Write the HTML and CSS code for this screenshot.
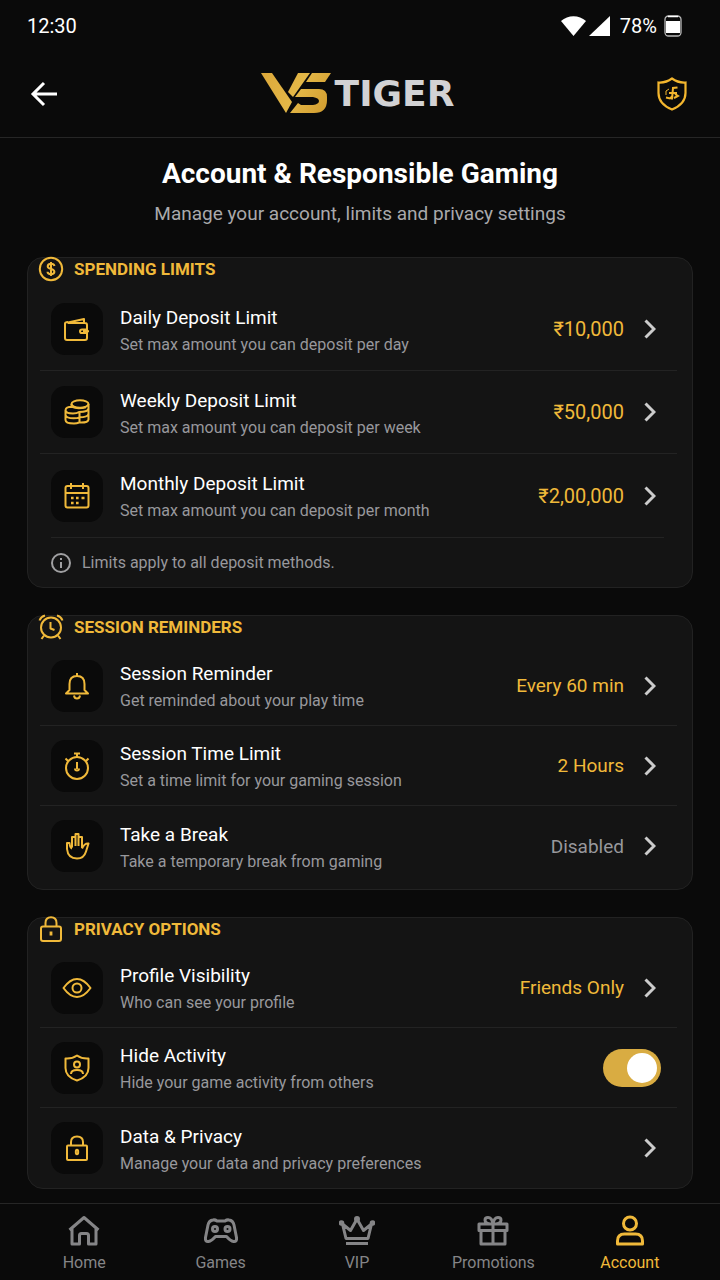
FILE: index.html
```html
<!DOCTYPE html>
<html lang="en">
<head>
    <meta charset="UTF-8">
    <meta name="viewport" content="width=device-width, initial-scale=1.0">
    <title>Account &amp; Responsible Gaming</title>
    <link rel="stylesheet" href="styles.css">
</head>
<body>
    <svg class="sprite" aria-hidden="true">
        <symbol id="chevron" viewBox="0 0 12 20">
            <path d="M1.500 1.500 10 10l-8.500 8.500"/>
        </symbol>
    </svg>

    <div class="status-bar">
        <span>12:30</span>
        <div class="status-icons">
            <svg width="25" height="20" viewBox="0 0 25 20"><path fill="#fff" d="M0 5C7-1.500 18-1.500 25 5L12.500 20z"/></svg>
            <svg class="signal" width="21" height="20" viewBox="0 0 21 20"><path fill="#fff" d="M21 0v20H0z"/></svg>
            <span>78%</span>
            <svg width="18" height="22" viewBox="0 0 18 22">
                <rect x="1" y="1" width="16" height="20" rx="3.500" fill="none" stroke="#bbb" stroke-width="1.300"/>
                <path d="M4 1.500h10" stroke="#fff" stroke-width="1.500"/>
                <rect x="2" y="6" width="14" height="12" fill="#fff"/>
            </svg>
        </div>
    </div>

    <header class="top-bar">
        <button class="icon-button" type="button" aria-label="Back">
            <svg width="28" height="26" viewBox="0 0 28 26" fill="none" stroke="#fff" stroke-width="3"><path d="M27 13H3M14 2 3 13l11 11"/></svg>
        </button>
        <a class="logo" href="#">
            <svg width="70" height="41" viewBox="0 0 70 41" aria-label="V5">
                <defs>
                    <linearGradient id="gold" gradientUnits="userSpaceOnUse" x1="0" y1="0" x2="70" y2="41">
                        <stop offset="0" stop-color="#dca83a"/>
                        <stop offset="0.500" stop-color="#e3b747"/>
                        <stop offset="1" stop-color="#cf992c"/>
                    </linearGradient>
                </defs>
                <g fill="url(#gold)">
                    <path d="M0 0h11l20 29-6 11z"/>
                    <path d="M37 0h12L32 24l-5-5z"/>
                    <path d="M51 0h19l-6 9H45z"/>
                    <path d="M40 16h18q8 0 8 8v3q0 13-13 13H29l8-10 3 2h12q6-1 6-4t-6-4H34z"/>
                </g>
            </svg>
            <span>TIGER</span>
        </a>
        <button class="icon-button" type="button" aria-label="Safe gaming">
            <svg width="30" height="34" viewBox="0 0 30 34" fill="none" stroke="#f3b62e" stroke-width="2.200">
                <path d="M15 1.500Q21 6 28.500 5.500V16q0 11-13.500 16.500Q1.500 27 1.500 16V5.500Q9 6 15 1.500z"/>
                <path d="M20.500 10.500 16 11l-1 11.500M9 20.500l4 1 2-2M12 16h8M18 17l3 2-4 2" stroke-width="2"/>
                <path d="M9 18v-4l3-2" stroke-width="1"/>
            </svg>
        </button>
    </header>

    <main>
        <div class="page-title">
            <h1>Account &amp; Responsible Gaming</h1>
            <p>Manage your account, limits and privacy settings</p>
        </div>

        <section class="card spending">
            <h2>
                <svg width="26" height="26" viewBox="0 0 26 26">
                    <circle cx="13" cy="13" r="11.200"/>
                    <path d="M16.500 10q-.5-2.200-3.500-2.200T9.700 10.200q0 2 3.300 2.700t3.400 2.900q0 2.400-3.400 2.400t-3.500-2.400M13 6v14"/>
                </svg>
                SPENDING LIMITS
            </h2>
            <a class="row" href="#">
                <span class="tile"><svg width="28" height="28" viewBox="0 0 28 28"><path d="M5 8.500v-1L21 4v4M5 8h17q2 0 2 2v13q0 2-2 2H4q-2 0-2-2V8.500Q2 7 5 7M24 14.500h-5q-2 0-2 1.800t2 1.700h5M20 16.200h6"/></svg></span>
                <span class="info"><strong>Daily Deposit Limit</strong><small>Set max amount you can deposit per day</small></span>
                <span class="value">₹10,000</span>
                <svg class="chevron"><use href="#chevron"/></svg>
            </a>
            <a class="row" href="#">
                <span class="tile"><svg width="28" height="28" viewBox="0 0 28 28"><ellipse cx="17" cy="6" rx="8.500" ry="3.700"/><path d="M8.500 6v2.500M25.500 6v16M2.500 12q0 3.500 7.500 3.500 4 0 6-1.500 9 0 9.500-3.500M2.500 12Q3 8.800 9 8.800q5 2.500 14 .5M2.500 12v10q0 3.500 8.500 3.500 3 0 5-1 9 .5 9.500-3M2.500 17q1 3.300 8 3.300 4 0 6-1 8 0 9-3.300M16.500 14v11"/></svg></span>
                <span class="info"><strong>Weekly Deposit Limit</strong><small>Set max amount you can deposit per week</small></span>
                <span class="value">₹50,000</span>
                <svg class="chevron"><use href="#chevron"/></svg>
            </a>
            <a class="row" href="#">
                <span class="tile"><svg width="28" height="28" viewBox="0 0 28 28"><rect x="2.500" y="4" width="23" height="21.500" rx="2"/><path d="M2.500 11h23M8 1v6M20 1v6"/><path d="M8 16h2.600M13 16h2.600M18.500 16h3M8 21h2.600M13 21h2.600" stroke-width="2.600"/></svg></span>
                <span class="info"><strong>Monthly Deposit Limit</strong><small>Set max amount you can deposit per month</small></span>
                <span class="value">₹2,00,000</span>
                <svg class="chevron"><use href="#chevron"/></svg>
            </a>
            <p class="note">
                <svg width="20" height="20" viewBox="0 0 20 20"><circle cx="10" cy="10" r="9"/><path d="M10 9v6M10 5v2"/></svg>
                Limits apply to all deposit methods.
            </p>
        </section>

        <section class="card session">
            <h2>
                <svg width="26" height="26" viewBox="0 0 26 26">
                    <circle cx="13" cy="13.500" r="10"/>
                    <path d="M12.500 8v6.500l4 1.500M1.500 6.500Q3 2.500 7 1.500M24.500 6.500Q23 2.500 19 1.500M6 21.500 3.500 25M20 21.500l2.500 3.500"/>
                </svg>
                SESSION REMINDERS
            </h2>
            <a class="row" href="#">
                <span class="tile"><svg width="28" height="28" viewBox="0 0 28 28"><path d="M14 1v3M6.500 18v-6q0-8 7.500-8t7.500 8v6l3.500 3.500H3zM11 23.500q.5 3 3 3t3-3"/></svg></span>
                <span class="info"><strong>Session Reminder</strong><small>Get reminded about your play time</small></span>
                <span class="value">Every 60 min</span>
                <svg class="chevron"><use href="#chevron"/></svg>
            </a>
            <a class="row" href="#">
                <span class="tile"><svg width="28" height="28" viewBox="0 0 28 28"><circle cx="14" cy="16" r="11"/><path d="M11 1.500h6M14 2v3M2.500 6.500 5 9M25.500 6.500 23 9M14 10v7M12 16.500a2 2 0 1 0 4 0" /></svg></span>
                <span class="info"><strong>Session Time Limit</strong><small>Set a time limit for your gaming session</small></span>
                <span class="value">2 Hours</span>
                <svg class="chevron"><use href="#chevron"/></svg>
            </a>
            <a class="row" href="#">
                <span class="tile"><svg width="28" height="28" viewBox="0 0 28 28"><path d="M9 15.500V5h3.500V2h3v3H19v11M12.500 4v10M15.500 4v10M9 16.500Q7 16 6.500 11H4v6q1 9.500 10 9.500 7 0 9-7l2.500-8q-4-.5-6.500 5"/></svg></span>
                <span class="info"><strong>Take a Break</strong><small>Take a temporary break from gaming</small></span>
                <span class="value off">Disabled</span>
                <svg class="chevron"><use href="#chevron"/></svg>
            </a>
        </section>

        <section class="card privacy">
            <h2>
                <svg width="26" height="26" viewBox="0 0 26 26">
                    <rect x="3" y="10.500" width="20" height="14.500" rx="2"/>
                    <path d="M7.500 10.500V7q0-5.700 5.500-5.700T18.500 7v3.500"/><path d="M13 15.500v4" stroke-width="2.800"/>
                </svg>
                PRIVACY OPTIONS
            </h2>
            <a class="row" href="#">
                <span class="tile"><svg width="30" height="28" viewBox="0 0 30 28"><path d="M1.500 14Q8 5 15 5t13.500 9Q22 23 15 23T1.500 14z"/><circle cx="15" cy="14" r="4.500"/></svg></span>
                <span class="info"><strong>Profile Visibility</strong><small>Who can see your profile</small></span>
                <span class="value">Friends Only</span>
                <svg class="chevron"><use href="#chevron"/></svg>
            </a>
            <label class="row">
                <span class="tile"><svg width="28" height="28" viewBox="0 0 28 28"><path d="M14 1.500Q19 5 25.500 4.500V14q0 9-11.500 12.500Q2.500 23 2.500 14V4.500Q9 5 14 1.500z"/><circle cx="14" cy="10.500" r="3"/><path d="M8 20q0-4 6-4t6 4"/></svg></span>
                <span class="info"><strong>Hide Activity</strong><small>Hide your game activity from others</small></span>
                <input class="switch" type="checkbox" checked>
            </label>
            <a class="row" href="#">
                <span class="tile"><svg width="28" height="28" viewBox="0 0 28 28"><rect x="4" y="11.500" width="20" height="14.500" rx="1"/><path d="M8 11.500V8q0-5.500 6-5.500T20 8v3.500"/><ellipse cx="14" cy="18" rx="1.200" ry="2.200"/></svg></span>
                <span class="info"><strong>Data &amp; Privacy</strong><small>Manage your data and privacy preferences</small></span>
                <svg class="chevron"><use href="#chevron"/></svg>
            </a>
        </section>
    </main>

    <nav class="tab-bar">
        <a href="#">
            <svg viewBox="0 0 32 32"><path d="M1.500 15 16 2.500 30.500 15M4 13v16h7.500V20.500q0-2 2-2h5q2 0 2 2V29H28V13"/></svg>
            Home
        </a>
        <a href="#">
            <svg viewBox="0 0 34 32"><path d="M9 5q2-.5 4 1h8q2-1.500 4-1 4 .5 5 5l2.500 12.500q.5 4.500-3 4-3-.5-7-5h-11q-4 4.500-7 5-3.500.5-3-4L4 10q1-4.500 5-5z"/><circle cx="11" cy="14" r="2.500"/><circle cx="23.500" cy="14" r="2.500"/></svg>
            Games
        </a>
        <a href="#">
            <svg viewBox="0 0 36 32"><path d="M3.500 9 7 23.500h22L32.500 9l-8 6.500L18 4l-6.500 11.500zM7 28.500h22"/><circle cx="2.500" cy="8" r="1.300"/><circle cx="18" cy="4" r="1.500"/><circle cx="33.500" cy="8" r="1.300"/></svg>
            VIP
        </a>
        <a href="#">
            <svg viewBox="0 0 32 32"><path d="M2 9h28v6.500H2zM4 15.500h24V29H4zM16 9v20M16 9Q8 9 8 5.200 8 2.500 11 2.500q4 0 5 6.500 1-6.500 5-6.500 3 0 3 2.700Q24 9 16 9z"/></svg>
            Promotions
        </a>
        <a class="active" href="#">
            <svg viewBox="0 0 32 32"><circle cx="16" cy="8.500" r="6.500"/><path d="M3.500 29v-3q0-7 7-7h11q7 0 7 7v3z"/></svg>
            Account
        </a>
    </nav>
</body>
</html>
```
FILE: styles.css
```css
* {
    box-sizing: border-box;
}
body {
    margin: 0;
    min-height: 100vh;
    display: flex;
    flex-direction: column;
    background-color: #0a0a0a;
    color: #fff;
    font-family: Roboto, "Liberation Sans", sans-serif;
}
a {
    color: inherit;
    text-decoration: none;
}
h1, h2, p {
    margin: 0;
}
.sprite {
    display: none;
}
.status-bar {
    display: flex;
    justify-content: space-between;
    align-items: center;
    height: 52px;
    padding: 0 38px 0 27px;
    font-size: 20px;
}
.status-icons {
    display: flex;
    align-items: center;
    gap: 10px;
}
.status-icons .signal {
    margin-left: -7px;
}
.status-icons svg:last-child {
    margin-left: -3px;
}
.top-bar {
    display: flex;
    justify-content: space-between;
    align-items: center;
    height: 86px;
    padding: 0 33px 2px 30px;
    border-bottom: 1px solid #262626;
}
.icon-button {
    display: flex;
    padding: 0;
    border: none;
    background: none;
    cursor: pointer;
}
.logo {
    display: flex;
    align-items: center;
    gap: 4px;
    color: #d2d2d4;
    font-family: "DejaVu Sans", sans-serif;
    font-size: 36px;
    font-weight: bold;
    line-height: 40px;
}
main {
    padding: 0 27px 14px;
}
.page-title {
    padding: 18px 0 29px;
    text-align: center;
}
.page-title h1 {
    font-size: 28px;
    line-height: 36px;
}
.page-title p {
    padding-top: 8px;
    color: #a9a9ac;
    font-size: 19px;
    line-height: 28px;
}
.card {
    margin-bottom: 27px;
    padding: 0 15px 0 12px;
    background-color: #141414;
    border: 1px solid #222;
    border-radius: 16px;
}
.card:last-child {
    margin-bottom: 0;
}
.card.session {
    padding-bottom: 3px;
}
.card h2 {
    display: flex;
    align-items: center;
    gap: 10px;
    height: 34px;
    margin: -4px 0 0 -2px;
    padding-bottom: 5px;
    color: #f0b93a;
    font-size: 17px;
    line-height: 20px;
}
.card h2 svg, .tile svg {
    fill: none;
    stroke: #f0b93a;
    stroke-width: 2;
    stroke-linejoin: round;
}
.row {
    display: flex;
    align-items: center;
    height: 80px;
    padding: 0 21px 0 11px;
    border-bottom: 1px solid #232323;
}
.spending .row {
    height: 83px;
}
.row:last-child, .spending .row:nth-of-type(3) {
    border-bottom: none;
}
.tile {
    display: flex;
    align-items: center;
    justify-content: center;
    width: 52px;
    height: 52px;
    margin-right: 17px;
    background-color: #0a0a0a;
    border-radius: 14px;
}
.info {
    display: flex;
    flex: 1;
    flex-direction: column;
    gap: 3px;
    padding-top: 4px;
}
.info strong {
    font-size: 19px;
    font-weight: 400;
    line-height: 24px;
}
.info small {
    color: #98989c;
    font-size: 16px;
    line-height: 24px;
}
.value {
    color: #f0b93a;
    font-size: 19px;
}
.spending .value {
    font-size: 20px;
}
.value.off {
    color: #98989c;
}
.chevron {
    width: 12px;
    height: 20px;
    margin-left: 20px;
    fill: none;
    stroke: #ccc;
    stroke-width: 3;
}
.switch {
    appearance: none;
    width: 58px;
    height: 38px;
    margin: 0 -5px 0 0;
    padding: 4px;
    background-color: #d9ac42;
    border-radius: 19px;
    cursor: pointer;
}
.switch::before {
    content: "";
    display: block;
    width: 30px;
    height: 30px;
    background-color: #fff;
    border-radius: 50%;
}
.switch:checked::before {
    margin-left: 20px;
}
.switch:not(:checked) {
    background-color: #3a3a3a;
}
.note {
    display: flex;
    align-items: center;
    gap: 11px;
    height: 50px;
    margin: 0 13px 0 11px;
    border-top: 1px solid #232323;
    color: #98989c;
    font-size: 16px;
}
.note svg {
    fill: none;
    stroke: #a0a0a2;
    stroke-width: 2;
}
.tab-bar {
    position: sticky;
    bottom: 0;
    display: grid;
    grid-template-columns: repeat(5, 1fr);
    margin-top: auto;
    padding: 11px 22px 7px 16px;
    background-color: #0a0a0a;
    border-top: 1px solid #262626;
}
.tab-bar a {
    display: flex;
    flex-direction: column;
    align-items: center;
    gap: 5px;
    color: #858587;
    font-size: 16px;
    line-height: 22px;
}
.tab-bar svg {
    height: 32px;
    fill: none;
    stroke: currentColor;
    stroke-width: 3;
    stroke-linejoin: round;
}
.tab-bar .active {
    color: #f0b93a;
}
```
